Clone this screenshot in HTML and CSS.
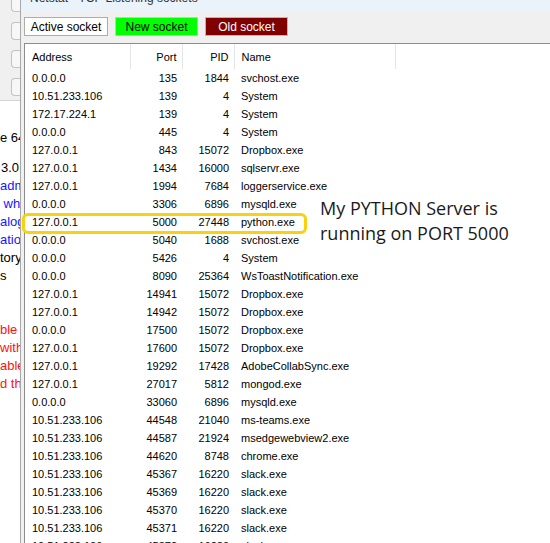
FILE: index.html
```html
<!DOCTYPE html>
<html lang="en">
<head>
<meta charset="UTF-8">
<title>Netstat - TCP Listening sockets</title>
<link rel="stylesheet" href="styles.css">
</head>
<body>
    <!-- window behind, mostly hidden -->
    <div class="backwin">
        <div class="backtop">
            <div class="field first"></div>
            <div class="field"></div>
            <div class="field"></div>
            <div class="field"></div>
        </div>
        <div class="backtext">
            <div class="ln l1">e 64</div>
            <div class="ln l2">3.0</div>
            <div class="ln blue">adm</div>
            <div class="ln blue">&nbsp;wh</div>
            <div class="ln blue">alog</div>
            <div class="ln blue">ation</div>
            <div class="ln">tory</div>
            <div class="ln">s</div>
            <div class="ln gap red">ble</div>
            <div class="ln red">with</div>
            <div class="ln red">able</div>
            <div class="ln red">d th</div>
        </div>
    </div>

    <!-- netstat window -->
    <div class="win">
        <div class="titlebar"><span>Netstat - TCP Listening sockets</span></div>
        <div class="toolbar">
            <button class="btn active">Active socket</button>
            <button class="btn new">New socket</button>
            <button class="btn old">Old socket</button>
        </div>
        <div class="list">
            <table>
                <colgroup>
                    <col class="w-addr"><col class="w-port"><col class="w-pid"><col class="w-name"><col>
                </colgroup>
                <thead>
                    <tr><th class="c-addr">Address</th><th class="c-port">Port</th><th class="c-pid">PID</th><th class="c-name">Name</th><th class="c-rest"></th></tr>
                </thead>
                <tbody>
                    <tr><td class="c-addr">0.0.0.0</td><td class="c-port">135</td><td class="c-pid">1844</td><td class="c-name">svchost.exe</td><td></td></tr>
                    <tr><td class="c-addr">10.51.233.106</td><td class="c-port">139</td><td class="c-pid">4</td><td class="c-name">System</td><td></td></tr>
                    <tr><td class="c-addr">172.17.224.1</td><td class="c-port">139</td><td class="c-pid">4</td><td class="c-name">System</td><td></td></tr>
                    <tr><td class="c-addr">0.0.0.0</td><td class="c-port">445</td><td class="c-pid">4</td><td class="c-name">System</td><td></td></tr>
                    <tr><td class="c-addr">127.0.0.1</td><td class="c-port">843</td><td class="c-pid">15072</td><td class="c-name">Dropbox.exe</td><td></td></tr>
                    <tr><td class="c-addr">127.0.0.1</td><td class="c-port">1434</td><td class="c-pid">16000</td><td class="c-name">sqlservr.exe</td><td></td></tr>
                    <tr><td class="c-addr">127.0.0.1</td><td class="c-port">1994</td><td class="c-pid">7684</td><td class="c-name">loggerservice.exe</td><td></td></tr>
                    <tr><td class="c-addr">0.0.0.0</td><td class="c-port">3306</td><td class="c-pid">6896</td><td class="c-name">mysqld.exe</td><td></td></tr>
                    <tr><td class="c-addr">127.0.0.1</td><td class="c-port">5000</td><td class="c-pid">27448</td><td class="c-name">python.exe</td><td></td></tr>
                    <tr><td class="c-addr">0.0.0.0</td><td class="c-port">5040</td><td class="c-pid">1688</td><td class="c-name">svchost.exe</td><td></td></tr>
                    <tr><td class="c-addr">0.0.0.0</td><td class="c-port">5426</td><td class="c-pid">4</td><td class="c-name">System</td><td></td></tr>
                    <tr><td class="c-addr">0.0.0.0</td><td class="c-port">8090</td><td class="c-pid">25364</td><td class="c-name">WsToastNotification.exe</td><td></td></tr>
                    <tr><td class="c-addr">127.0.0.1</td><td class="c-port">14941</td><td class="c-pid">15072</td><td class="c-name">Dropbox.exe</td><td></td></tr>
                    <tr><td class="c-addr">127.0.0.1</td><td class="c-port">14942</td><td class="c-pid">15072</td><td class="c-name">Dropbox.exe</td><td></td></tr>
                    <tr><td class="c-addr">0.0.0.0</td><td class="c-port">17500</td><td class="c-pid">15072</td><td class="c-name">Dropbox.exe</td><td></td></tr>
                    <tr><td class="c-addr">127.0.0.1</td><td class="c-port">17600</td><td class="c-pid">15072</td><td class="c-name">Dropbox.exe</td><td></td></tr>
                    <tr><td class="c-addr">127.0.0.1</td><td class="c-port">19292</td><td class="c-pid">17428</td><td class="c-name">AdobeCollabSync.exe</td><td></td></tr>
                    <tr><td class="c-addr">127.0.0.1</td><td class="c-port">27017</td><td class="c-pid">5812</td><td class="c-name">mongod.exe</td><td></td></tr>
                    <tr><td class="c-addr">0.0.0.0</td><td class="c-port">33060</td><td class="c-pid">6896</td><td class="c-name">mysqld.exe</td><td></td></tr>
                    <tr><td class="c-addr">10.51.233.106</td><td class="c-port">44548</td><td class="c-pid">21040</td><td class="c-name">ms-teams.exe</td><td></td></tr>
                    <tr><td class="c-addr">10.51.233.106</td><td class="c-port">44587</td><td class="c-pid">21924</td><td class="c-name">msedgewebview2.exe</td><td></td></tr>
                    <tr><td class="c-addr">10.51.233.106</td><td class="c-port">44620</td><td class="c-pid">8748</td><td class="c-name">chrome.exe</td><td></td></tr>
                    <tr><td class="c-addr">10.51.233.106</td><td class="c-port">45367</td><td class="c-pid">16220</td><td class="c-name">slack.exe</td><td></td></tr>
                    <tr><td class="c-addr">10.51.233.106</td><td class="c-port">45369</td><td class="c-pid">16220</td><td class="c-name">slack.exe</td><td></td></tr>
                    <tr><td class="c-addr">10.51.233.106</td><td class="c-port">45370</td><td class="c-pid">16220</td><td class="c-name">slack.exe</td><td></td></tr>
                    <tr><td class="c-addr">10.51.233.106</td><td class="c-port">45371</td><td class="c-pid">16220</td><td class="c-name">slack.exe</td><td></td></tr>
                    <tr><td class="c-addr">10.51.233.106</td><td class="c-port">45372</td><td class="c-pid">16220</td><td class="c-name">slack.exe</td><td></td></tr>
                </tbody>
            </table>
        </div>
    </div>

    <!-- annotation drawn over the screenshot -->
    <div class="mark"></div>
    <div class="note">My PYTHON Server is<br>running on PORT 5000</div>
</body>
</html>
```

FILE: styles.css
```css
body {
    margin: 0;
    width: 550px;
    height: 543px;
    overflow: hidden;
    position: relative;
    display: flex;
    font-family: "Liberation Sans", Arial, sans-serif;
    background: #fff;
}

/* background window on the left */
.backwin {
    width: 20px;
    flex-shrink: 0;
    overflow: hidden;
}
.backtop {
    height: 107px;
    background: #f0f0f0;
    border-bottom: 1px solid #d4d4d4;
    box-sizing: border-box;
    padding-left: 11px;
}
.field {
    height: 18px;
    margin-top: 10px;
    border: 1px solid #c2c2c2;
    border-right: none;
    border-radius: 4px 0 0 4px;
    background: #f7f7f7;
    box-sizing: border-box;
}
.field.first {
    margin-top: -6px;
}
.backtext {
    padding-top: 28px;
    font-size: 13px;
    white-space: nowrap;
    color: #000;
}
.ln {
    height: 18px;
    line-height: 18px;
}
.l1 {
    margin-bottom: 12px;
}
.l2 {
    padding-left: 1px;
}
.gap {
    margin-top: 36px;
}
.blue { color: #1515ff; }
.red { color: #ff1010; }

/* netstat window */
.win {
    flex: 1;
    border-left: 1px solid #a8a8a8;
    background: #f0f0f0;
    display: flex;
    flex-direction: column;
}
.titlebar {
    height: 12px;
    background: #eaf2fa;
    overflow: hidden;
    padding-left: 9px;
}
.titlebar span {
    display: block;
    margin-top: -8px;
    font-size: 12px;
    line-height: 12px;
    color: #333;
}
.toolbar {
    height: 31px;
    box-sizing: border-box;
    padding: 5px 0 0 3px;
    display: flex;
    gap: 7px;
    align-items: flex-start;
}
.btn {
    width: 84px;
    height: 19px;
    padding: 0;
    font-family: "Liberation Sans", Arial, sans-serif;
    font-size: 12px;
    border: 1px solid #adadad;
    background: #fff;
    color: #000;
}
.btn.new {
    width: 83px;
    background: #00ff00;
    border-color: #c8c8c8;
}
.btn.old {
    width: 83px;
    background: #800000;
    border-color: #c8b0b0;
    color: #fff;
}

.list {
    flex: 1;
    margin-left: 3px;
    background: #fff;
    border-top: 1px solid #8c8c8c;
    border-left: 1px solid #8c8c8c;
    overflow: hidden;
}
table {
    border-collapse: collapse;
    table-layout: fixed;
    font-size: 11px;
    color: #000;
    white-space: nowrap;
    width: 100%;
}
.w-addr { width: 105px; }
.w-port { width: 52px; }
.w-pid { width: 52px; }
.w-name { width: 161px; }
th {
    font-weight: normal;
    height: 25px;
    padding-top: 2px;
    box-sizing: border-box;
    border-right: 1px solid #e5e5e5;
}
th.c-rest {
    border-right: none;
}
td {
    height: 18px;
    padding-top: 0;
    padding-bottom: 0;
}
.c-addr {
    text-align: left;
    padding-left: 7px;
}
.c-port,
.c-pid {
    text-align: right;
    padding-right: 5px;
}
.c-name {
    text-align: left;
    padding-left: 7px;
}

/* yellow box and note */
.mark {
    position: absolute;
    left: 22px;
    top: 213px;
    width: 285px;
    height: 21px;
    box-sizing: border-box;
    border: 3px solid #f6d20f;
    border-radius: 6px;
}
.note {
    position: absolute;
    left: 320px;
    top: 196px;
    font-family: "Open Sans", sans-serif;
    font-size: 18px;
    line-height: 25px;
    color: #1a1a1a;
}
```
